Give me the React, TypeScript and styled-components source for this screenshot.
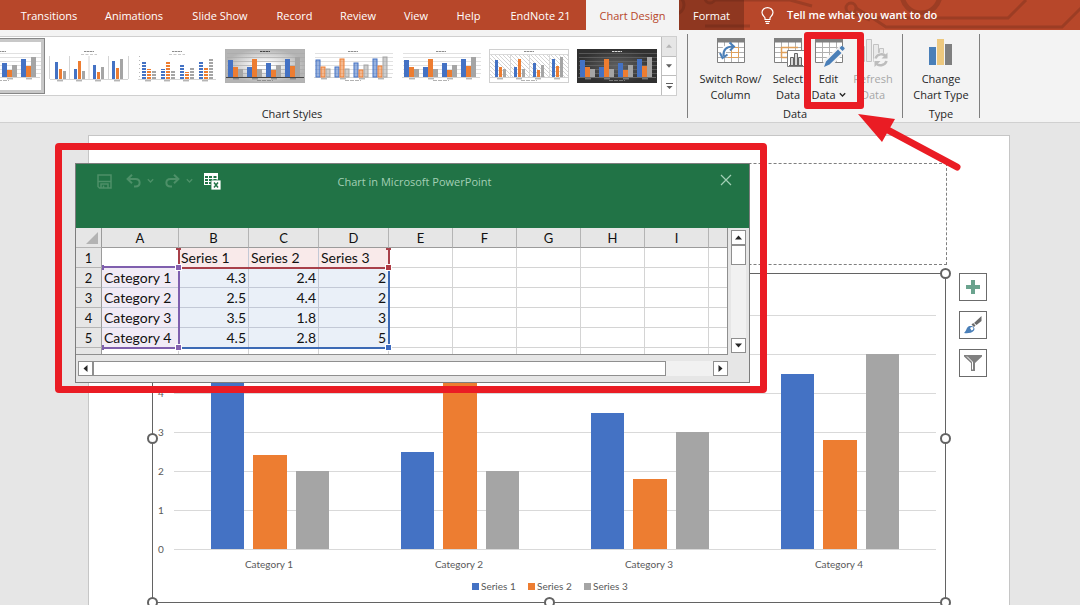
import React from 'react';
import styled, { createGlobalStyle, css } from 'styled-components';

const ui = '"Open Sans", "Segoe UI", sans-serif';
const calibri = 'Lato, Calibri, sans-serif';
const red = '#ea1c24';
const blue = '#4472c4';
const orange = '#ed7d31';
const gray = '#a5a5a5';

const GlobalStyle = createGlobalStyle`
  * { box-sizing: border-box; }
  body { margin: 0; background: #e6e6e6; font: 11px/16px ${ui}; color: #262626; }
  button { font: inherit; color: inherit; padding: 0; margin: 0; border: 0; background: none; }
  svg { display: block; }
`;

const Page = styled.div`
  display: flex;
  flex-direction: column;
  height: 100vh;
  overflow: hidden;
`;

/* ---------- tab strip ---------- */

const TabStrip = styled.nav`
  position: relative;
  display: flex;
  height: 30px;
  flex: none;
  padding-left: 7px;
  background: #b7472a;
  color: #fff;
  overflow: hidden;
`;

const Circuit = styled.svg`
  position: absolute;
  left: 670px;
  top: 0;
  fill: none;
  stroke: #9c3d24;
  stroke-width: 3;
`;

const Tab = styled.button<{ $width: number; $kind?: 'active' | 'context' }>`
  position: relative;
  width: ${p => p.$width}px;
  flex: none;
  line-height: 32px;
  white-space: nowrap;
  ${p => p.$kind === 'active' && css`background: #f3f3f3; color: #b7472a;`}
  ${p => p.$kind === 'context' && css`background: rgba(80, 30, 15, 0.38);`}
`;

const TellMe = styled.button`
  position: relative;
  display: flex;
  align-items: center;
  gap: 13px;
  margin-left: 17px;
  font-weight: 600;
`;

const tabs: { name: string; width: number; kind?: 'active' | 'context' }[] = [
  { name: 'Transitions', width: 84 },
  { name: 'Animations', width: 86 },
  { name: 'Slide Show', width: 86 },
  { name: 'Record', width: 63 },
  { name: 'Review', width: 64 },
  { name: 'View', width: 52 },
  { name: 'Help', width: 53 },
  { name: 'EndNote 21', width: 91 },
  { name: 'Chart Design', width: 93, kind: 'active' },
  { name: 'Format', width: 65, kind: 'context' },
];

/* ---------- ribbon ---------- */

const Ribbon = styled.div`
  display: flex;
  flex: none;
  height: 93px;
  padding-top: 4px;
  background: #f3f3f3;
  border-bottom: 1px solid #d0d0d0;
`;

const Group = styled.section<{ $width: number }>`
  display: flex;
  flex-direction: column;
  justify-content: space-between;
  flex: none;
  width: ${p => p.$width}px;
  height: 84px;
  border-right: 1px solid #7f7f7f;
`;

const GroupLabel = styled.h2<{ $inset?: number }>`
  margin: 0 0 -4px;
  padding-right: ${p => p.$inset ?? 0}px;
  font: 11px/16px ${ui};
  text-align: center;
`;

const Gallery = styled.div`
  display: flex;
  height: 60px;
  width: 677px;
  margin-top: 2px;
  border: solid #cfcfcf;
  border-width: 1px 1px 1px 0;
  background: #fff;
`;

const Styles = styled.div`
  display: flex;
  flex: 1;
  overflow: hidden;
`;

const StyleCell = styled.button<{ $selected?: boolean }>`
  display: flex;
  align-items: center;
  justify-content: center;
  flex: none;
  width: 88px;
  height: 58px;
  ${p => p.$selected && css`
    margin-left: -43px;
    margin-top: 1px;
    height: 56px;
    border: 1px solid #868686;
    box-shadow: inset 0 0 0 3px #c8c8c8;
  `}
`;

const GalleryScroll = styled.div`
  display: flex;
  flex-direction: column;
  width: 15px;
  border-left: 1px solid #bdbdbd;
`;

const ScrollStep = styled.button<{ $off?: boolean }>`
  display: flex;
  align-items: center;
  justify-content: center;
  flex: 1;
  background: ${p => (p.$off ? '#e6e6e6' : '#fff')};
  color: ${p => (p.$off ? '#b5b5b5' : '#5f5f5f')};
  & + & { border-top: 1px solid #bdbdbd; }
`;

const Commands = styled.div<{ $pad?: number }>`
  display: flex;
  padding-left: ${p => p.$pad ?? 0}px;
`;

const Command = styled.button<{ $width: number; $off?: boolean }>`
  position: relative;
  display: flex;
  flex-direction: column;
  align-items: center;
  flex: none;
  width: ${p => p.$width}px;
  padding-top: 2px;
  white-space: nowrap;
  opacity: ${p => (p.$off ? 0.38 : 1)};
  & > svg { margin-bottom: 3px; }
`;

const WithChevron = styled.span`
  display: flex;
  align-items: center;
  gap: 3px;
`;

const EditMark = styled.span`
  position: absolute;
  left: -2px;
  top: -2px;
  width: 60px;
  height: 77px;
  border: 7px solid ${red};
  border-radius: 3px;
  z-index: 3;
`;

const Arrow = styled.svg`
  position: absolute;
  left: 50px;
  top: 75px;
  z-index: 3;
`;

const EditCommand = styled(Command)`
  z-index: 4;
`;

/* ---------- slide ---------- */

const Stage = styled.main`
  position: relative;
  flex: 1;
  padding: 12px 70px 0 88px;
`;

const Slide = styled.div`
  height: 600px;
  padding: 27px 63px 0;
  border: 1px solid #c6c6c6;
  background: #fff;
`;

const TitleBox = styled.div`
  height: 102px;
  margin-right: -1px;
  border: 1px dashed #7f7f7f;
`;

const ChartFrame = styled.div`
  position: relative;
  margin-top: 8px;
  & > svg { width: 100%; height: auto; overflow: visible; }
  text { font: 10px ${calibri}; fill: #595959; }
`;

const ChartTools = styled.div`
  position: absolute;
  left: calc(100% + 13px);
  top: 0;
  display: flex;
  flex-direction: column;
  gap: 10px;
`;

const ChartTool = styled.button`
  display: flex;
  align-items: center;
  justify-content: center;
  width: 28px;
  height: 28px;
  border: 1px solid #6b6b6b;
  background: #fff;
`;

/* ---------- data sheet window ---------- */

const SheetMark = styled.div`
  position: absolute;
  left: 55px;
  top: 20px;
  padding: 13px 10px 3px 13px;
  border: 7px solid ${red};
  border-radius: 4px;
  z-index: 2;
`;

const Window = styled.section`
  width: 675px;
  height: 220px;
  border: 1px solid #7d7d7d;
  background: #e6e6e6;
`;

const WindowBar = styled.header`
  display: grid;
  grid-template-columns: 1fr auto 1fr;
  height: 64px;
  padding: 8px 17px 0 21px;
  background: #217346;
  color: #a3cfb5;
`;

const QuickTools = styled.div`
  display: flex;
  align-items: center;
  height: 18px;
  color: #4d9068;
`;

const QuickTool = styled.button<{ $gap: number }>`
  margin-right: ${p => p.$gap}px;
`;

const WindowTitle = styled.h1`
  margin: 0;
  padding-top: 1px;
  font: 11px/18px ${ui};
`;

const CloseButton = styled.button`
  justify-self: end;
  align-self: start;
  padding-top: 2px;
`;

const SheetBody = styled.div`
  display: flex;
`;

const SheetView = styled.div`
  position: relative;
  width: 652px;
  height: 127px;
  overflow: hidden;
  border: solid #8f8f8f;
  border-width: 0 1px 1px 0;
`;

const SelectionMarks = styled.svg`
  position: absolute;
  left: 0;
  top: 0;
`;

const Sheet = styled.table`
  width: 652px;
  table-layout: fixed;
  border-collapse: separate;
  border-spacing: 0;
  font: 14px/18px ${calibri};
  color: #111;
`;

const HeadCell = styled.th<{ $side?: boolean }>`
  height: 20px;
  padding: 0;
  font-weight: 400;
  font-size: 13px;
  text-align: center;
  overflow: hidden;
  background: #e6e6e6;
  border-right: 1px solid ${p => (p.$side ? '#9b9b9b' : '#b4b4b4')};
  border-bottom: 1px solid ${p => (p.$side ? '#b4b4b4' : '#9b9b9b')};
  & > svg { margin-left: 10px; }
`;

const Cell = styled.td<{ $fill?: string; $number?: boolean }>`
  height: 20px;
  padding: 1px 2px 0;
  overflow: hidden;
  white-space: nowrap;
  text-align: ${p => (p.$number ? 'right' : 'left')};
  background: ${p => p.$fill ?? '#fff'};
  border-right: 1px solid ${p => (p.$fill ? '#c3c9d6' : '#d4d4d4')};
  border-bottom: 1px solid ${p => (p.$fill ? '#c3c9d6' : '#d4d4d4')};
`;

const VScroll = styled.div`
  display: flex;
  flex-direction: column;
  width: 15px;
  height: 123px;
  margin: 2px 0 0 3px;
  background: #f1f1f1;
`;

const HScroll = styled.div`
  display: flex;
  width: 650px;
  height: 15px;
  margin: 6px 0 0 2px;
  background: #f1f1f1;
`;

const ArrowButton = styled.button`
  display: flex;
  align-items: center;
  justify-content: center;
  flex: none;
  width: 15px;
  height: 15px;
  border: 1px solid #8f8f8f;
  background: #fff;
`;

const Thumb = styled.div<{ $length: number; $vertical?: boolean }>`
  flex: none;
  width: ${p => (p.$vertical ? 15 : p.$length)}px;
  height: ${p => (p.$vertical ? p.$length : 15)}px;
  margin-${p => (p.$vertical ? 'bottom' : 'right')}: auto;
  border: 1px solid #8f8f8f;
  background: #fff;
`;

/* ---------- drawings ---------- */

const data = [
  { name: 'Category 1', values: [4.3, 2.4, 2] },
  { name: 'Category 2', values: [2.5, 4.4, 2] },
  { name: 'Category 3', values: [3.5, 1.8, 3] },
  { name: 'Category 4', values: [4.5, 2.8, 5] },
];
const seriesNames = ['Series 1', 'Series 2', 'Series 3'];
const seriesColors = [blue, orange, gray];

type ThumbKind = 'plain' | 'thin' | 'striped' | 'silver' | 'outline' | 'soft' | 'hatched' | 'dark';

function StyleThumb({ kind }: { kind: ThumbKind }) {
  const dark = kind === 'dark';
  const ink = dark ? '#ddd' : '#444';
  const line = dark ? '#6a6a6a' : kind === 'silver' ? '#aaa' : '#d4d4d4';
  const low = kind === 'thin' || kind === 'striped';
  const w = kind === 'thin' ? 3 : kind === 'hatched' ? 3 : kind === 'outline' ? 4 : 5;
  const step = kind === 'thin' || kind === 'hatched' ? 4 : 5;
  const base = low ? 30 : 28;
  return (
    <svg width="80" height="34" viewBox="0 0 80 34">
      <defs>
        <radialGradient id="silverFill"><stop offset="0.2" stopColor="#fff" /><stop offset="1" stopColor="#b4b4b4" /></radialGradient>
        <radialGradient id="darkFill"><stop offset="0.1" stopColor="#5c5c5c" /><stop offset="1" stopColor="#303030" /></radialGradient>
        <pattern id="hatch" width="4" height="4" patternUnits="userSpaceOnUse"><path d="M0 0L4 4" stroke="#c9c9c9" strokeWidth="0.800" /></pattern>
      </defs>
      {kind === 'silver' && <rect width="80" height="34" fill="url(#silverFill)" stroke="#b0b0b0" />}
      {dark && <rect width="80" height="34" fill="url(#darkFill)" />}
      {kind === 'hatched' && <><rect x="0.5" y="0.5" width="79" height="33" fill="#fff" stroke="#d0d0d0" /><rect x="1" y="5" width="78" height="24" fill="url(#hatch)" /></>}
      <path d="M35 2.500h10" stroke={ink} strokeWidth="1" strokeDasharray="2 .5 3 .5" opacity={dark || kind === 'silver' ? 1 : 0.6} />
      {low
        ? <path d="M32 5.500h16" stroke={ink} strokeWidth="0.7" strokeDasharray="3 1.5" opacity="0.4" />
        : <path d="M32 31.500h16" stroke={ink} strokeWidth="0.8" strokeDasharray="4 1" opacity="0.5" />}
      {!low && kind !== 'hatched' && <path d="M2 4.500h78M2 8.500h78M2 12.500h78M2 16.500h78M2 20.500h78M2 24.500h78" stroke={line} strokeWidth="0.7" />}
      {kind === 'thin' && <path d="M.5 7v23M20.500 7v23M40 7v23M59.500 7v23M79.500 7v23" stroke="#d4d4d4" />}
      {kind === 'striped' && <path d="M2.500 7v22" stroke="#999" strokeDasharray="1 3" opacity="0.7" />}
      {kind === 'hatched' && <path d="M21.500 5v23M40.500 5v23M60.500 5v23M1 5.500h78" stroke="#d9d9d9" />}
      <path d={`M1 ${base + 0.5}h78`} stroke={kind === 'silver' ? '#444' : line} />
      {data.map((d, c) => (
        <g key={d.name}>
          {d.values.map((v, s) => {
            const h = Math.round(v * 4);
            const x = (kind === 'thin' || kind === 'hatched' ? 6 : 3) + c * 19 + s * step + (kind === 'striped' ? 2 : 0);
            return (
              <g key={s}>
                {kind === 'striped'
                  ? <path d={`M${x + 2} ${base}v${-h}`} stroke={seriesColors[s]} strokeWidth="4" strokeDasharray="2 1" />
                  : <rect x={x} y={base - h} width={w} height={h} fill={seriesColors[s]}
                      fillOpacity={kind === 'outline' ? 0.55 : 1} stroke={kind === 'outline' ? seriesColors[s] : 'none'} />}
              </g>
            );
          })}
          <path d={`M${8 + c * 19} ${base + 1.8}h6`} stroke={ink} strokeWidth="0.8" opacity="0.7" />
        </g>
      ))}
    </svg>
  );
}

const kinds: ThumbKind[] = ['plain', 'thin', 'striped', 'silver', 'outline', 'soft', 'hatched', 'dark'];

const GridIcon = ({ children }: { children?: React.ReactNode }) => (
  <svg width="32" height="32" viewBox="0 0 32 32" fill="none">
    <path d="M2 2h28v25H2z" fill="#fff" />
    <path d="M9.500 6v21M16.500 6v21M23.500 6v21M2 11.500h28M2 16.500h28M2 21.500h28" stroke="#b0b0b0" />
    <path d="M2.500 2.500h27v24h-27z" stroke="#7f7f7f" />
    <path d="M2 2h28v4.500H2z" fill="#7f7f7f" />
    {children}
  </svg>
);

const SwitchIcon = () => (
  <GridIcon>
    <path d="M16.500 11.500h7v10h-7zM16.500 16.500h7M13 21.500h10" stroke="#e0a05a" />
    <path d="M8 19C8 13.500 11 10.500 16 10.500" stroke="#fff" strokeWidth="5" />
    <path d="M8.500 20C8 14 11 10.500 18 10.500" stroke="#4a7fb8" strokeWidth="2" />
    <path d="M14.500 6.500L19 10.500L15 14.500M5 17L7.500 22L12.500 18.500" stroke="#4a7fb8" strokeWidth="2" />
  </GridIcon>
);

const SelectIcon = () => (
  <GridIcon>
    <path d="M9.500 22V11.500H26M9.500 21.500h7M16 16.500h-6" stroke="#e0a05a" strokeWidth="1.500" />
    <path d="M15.500 14.500h17v16h-17z" fill="#fff" stroke="#7f7f7f" />
    <path d="M18.500 29.500v-8h3v8M22.500 29.500v-12h3v12M26.500 29.500v-8h3v8" fill="#d9d9d9" stroke="#666" />
    <path d="M17 29.500h14" stroke="#666" />
  </GridIcon>
);

const EditIcon = () => (
  <GridIcon>
    <path d="M9 32l2-8L27.500 9l6 5L19 30z" fill="#f3f3f3" />
    <path d="M11 31l2-5.500L25 13.500l3.500 3.500L16.500 28.500zM26.500 12l2-2c1-.7 4 2 3 3l-2 2z" fill="#4a7fb8" />
  </GridIcon>
);

const RefreshIcon = () => (
  <svg width="32" height="32" viewBox="0 0 32 32" fill="none" stroke="#777">
    <path d="M3.500 10.500h4v15h-4zM9.500 3.500h5v22h-5zM16.500 8.500h5v17h-5zM22.500 12.500h4v5h-4z" fill="#ddd" />
    <circle cx="24" cy="24" r="7.500" fill="#f3f3f3" stroke="none" />
    <path d="M18.500 22.500C20 17.500 27 17 29 21M29.500 25C28 30 21 30.500 19 27" strokeWidth="2.500" stroke="#666" />
    <path d="M30.500 16.500v6h-6zM17.500 31v-6h6z" fill="#666" stroke="none" />
  </svg>
);

const ChartTypeIcon = () => (
  <svg width="32" height="32" viewBox="0 0 32 32">
    <path d="M4 11h7v18H4z" fill="#4a7fb8" /><path d="M12 3h7v26h-7z" fill="#edc87e" /><path d="M20 8h7v21h-7z" fill="#7f7f7f" />
  </svg>
);

const Chevron = () => (
  <svg width="7" height="6" viewBox="0 0 7 6" fill="none" stroke="currentColor" strokeWidth="1.300"><path d="M.8 1.200L3.500 4L6.200 1.200" /></svg>
);

const Triangle = ({ turn = 0, size = 7 }: { turn?: number; size?: number }) => (
  <svg width={size} height={size} viewBox="0 0 7 7"><path d="M0 5.500h7L3.500 1.500z" fill="currentColor" transform={`rotate(${turn} 3.500 3.500)`} /></svg>
);

const Bulb = () => (
  <svg width="13" height="17" viewBox="0 0 13 17" fill="none" stroke="#fff" strokeWidth="1.200">
    <path d="M4 12.500V11C3.500 9.500 1 8.300 1 5.600a5.500 5 0 0 1 11 0C12 8.300 9.500 9.500 9 11v1.500zM4 14.500h5M4.800 16.400h3.400" />
  </svg>
);

const Undo = ({ flip }: { flip?: boolean }) => (
  <svg width="15" height="14" viewBox="0 0 15 14" fill="none" stroke="currentColor" strokeWidth="2">
    <g transform={flip ? 'matrix(-1 0 0 1 15 0)' : undefined}><path d="M6 .8L1.600 5L6 9.200M2 5h7.500c5.500 0 5.500 7.500 0 7.500H8" /></g>
  </svg>
);

/* y position of a value in the chart's own coordinates */
const valueY = (v: number) => 549 - v * 39;

function Chart() {
  return (
    <svg viewBox="152 273 794 330" role="img" aria-label="Clustered column chart">
      {[0, 1, 2, 3, 4, 5, 6].map(v => (
        <path key={v} d={`M174 ${valueY(v) + 0.5}H936`} stroke="#d9d9d9" />
      ))}
      {[0, 1, 2, 3, 4].map(v => (
        <text key={v} x="161" y={valueY(v) + 4} textAnchor="middle">{v}</text>
      ))}
      {data.map((d, c) => (
        <g key={d.name}>
          {d.values.map((v, s) => (
            <rect key={s} x={[211, 253, 296][s] + c * 190} y={Math.round(valueY(v))} width={s === 1 ? 34 : 33}
              height={549 - Math.round(valueY(v))} fill={seriesColors[s]} />
          ))}
          <text x={269 + c * 190} y="568" textAnchor="middle">{d.name}</text>
        </g>
      ))}
      {seriesNames.map((name, s) => (
        <g key={name}>
          <rect x={472 + s * 56} y="583" width="7" height="7" fill={seriesColors[s]} />
          <text x={481 + s * 56} y="590">{name}</text>
        </g>
      ))}
      <rect x="152.500" y="273.500" width="793" height="329" fill="none" stroke="#636363" />
      {[[152, 273], [549, 273], [945, 273], [152, 438], [945, 438], [152, 602], [549, 602], [945, 602]].map(([x, y]) => (
        <circle key={`${x}-${y}`} cx={x + 0.5} cy={y + 0.5} r="4.500" fill="#fff" stroke="#636363" strokeWidth="2" />
      ))}
    </svg>
  );
}

const columns = ['A', 'B', 'C', 'D', 'E', 'F', 'G', 'H', 'I', ''];
const columnWidths = [26, 77, 70, 70, 70, 64, 64, 64, 64, 64, 19];
const rows: (string | number)[][] = [['', ...seriesNames], ...data.map(d => [d.name, ...d.values]), []];

function fillFor(row: number, col: number) {
  if (row > 4 || col > 3) return undefined;
  if (row === 0) return col === 0 ? undefined : '#f9eaea';
  return col === 0 ? '#f1ebf6' : '#eaf0f8';
}

const handles = [
  { x: 312, y: 40, fill: '#b03a44' },
  { x: 102, y: 40, fill: '#8560b0' },
  { x: 102, y: 120, fill: '#8560b0' },
  { x: 312, y: 120, fill: '#3c6ac0' },
];

function DataSheet() {
  return (
    <SheetView>
      <Sheet>
        <colgroup>{columnWidths.map((w, i) => <col key={i} width={w} />)}</colgroup>
        <thead>
          <tr>
            <HeadCell $side><svg width="12" height="12"><path d="M12 0v12H0z" fill="#b3b3b3" /></svg></HeadCell>
            {columns.map((c, i) => <HeadCell key={i} scope="col">{c}</HeadCell>)}
          </tr>
        </thead>
        <tbody>
          {rows.map((row, r) => (
            <tr key={r}>
              <HeadCell $side scope="row">{r < 5 ? r + 1 : ''}</HeadCell>
              {columns.map((_, c) => (
                <Cell key={c} $fill={fillFor(r, c)} $number={typeof row[c] === 'number'}>{row[c]}</Cell>
              ))}
            </tr>
          ))}
        </tbody>
      </Sheet>
      <SelectionMarks width="652" height="127" fill="none" strokeWidth="2">
        <path d="M103 22v18M313 22v18M103 40H313M100 21h5M310 21h5" stroke="#a8404a" />
        <path d="M313 40v80M103 120H313" stroke="#3c6ab5" />
        <path d="M26 39H103M26 120H103M103 39v81" stroke="#7f5fae" />
        <path d="M26 37h2v5h-2zM26 117h2v5h-2z" fill="#7f5fae" />
        {handles.map(h => (
          <rect key={`${h.x}-${h.y}`} x={h.x - 2.5} y={h.y - 3.5} width="6" height="6" fill={h.fill} stroke="#fff" strokeWidth="1" />
        ))}
      </SelectionMarks>
    </SheetView>
  );
}

export default function App() {
  return (
    <Page>
      <GlobalStyle />
      <TabStrip>
        <Circuit width="410" height="30" viewBox="670 0 410 30">
          <circle cx="675" cy="5" r="9" /><circle cx="710" cy="-2" r="5" />
          <path d="M705 26H750M715 0H790L812 6M856 8L872 18H1008L1026 0M850 12L870 20M868 15L886 27H1062L1084 5M1010 16L1026 0" />
          <circle cx="851" cy="8" r="5" /><circle cx="921" cy="-6" r="19" strokeWidth="5" />
        </Circuit>
        {tabs.map(t => <Tab key={t.name} $width={t.width} $kind={t.kind}>{t.name}</Tab>)}
        <TellMe><Bulb />Tell me what you want to do</TellMe>
      </TabStrip>

      <Ribbon>
        <Group $width={688}>
          <Gallery>
            <Styles>
              {kinds.map((k, i) => <StyleCell key={k} $selected={i === 0} aria-label={`Style ${i + 1}`}><StyleThumb kind={k} /></StyleCell>)}
            </Styles>
            <GalleryScroll>
              <ScrollStep $off aria-label="Previous styles"><Triangle size={6} /></ScrollStep>
              <ScrollStep aria-label="Next styles"><Triangle turn={180} size={6} /></ScrollStep>
              <ScrollStep aria-label="More styles">
                <svg width="7" height="8" viewBox="0 0 7 8"><path d="M0 1h7v1H0zM.5 4h6l-3 3z" fill="currentColor" /></svg>
              </ScrollStep>
            </GalleryScroll>
          </Gallery>
          <GroupLabel $inset={103}>Chart Styles</GroupLabel>
        </Group>
        <Group $width={215}>
          <Commands $pad={3}>
            <Command $width={79}><SwitchIcon /><span>Switch Row/</span><span>Column</span></Command>
            <Command $width={36}><SelectIcon /><span>Select</span><span>Data</span></Command>
            <EditCommand $width={45}>
              <EditIcon /><span>Edit</span><WithChevron>Data<Chevron /></WithChevron>
              <EditMark />
              <Arrow width="110" height="64" viewBox="0 0 110 64">
                <path d="M30 20L101 58" stroke={red} strokeWidth="7" strokeLinecap="round" />
                <path d="M2 5L39 10L26 33z" fill={red} />
              </Arrow>
            </EditCommand>
            <Command $width={44} $off disabled><RefreshIcon /><span>Refresh</span><span>Data</span></Command>
          </Commands>
          <GroupLabel>Data</GroupLabel>
        </Group>
        <Group $width={77}>
          <Commands>
            <Command $width={76}><ChartTypeIcon /><span>Change</span><span>Chart Type</span></Command>
          </Commands>
          <GroupLabel>Type</GroupLabel>
        </Group>
      </Ribbon>

      <Stage>
        <Slide>
          <TitleBox />
          <ChartFrame>
            <Chart />
            <ChartTools>
              <ChartTool aria-label="Chart elements">
                <svg width="14" height="14"><path d="M5 0h4v5h5v4H9v5H5V9H0V5h5z" fill="#6aa38e" /></svg>
              </ChartTool>
              <ChartTool aria-label="Chart styles">
                <svg width="20" height="20" viewBox="0 0 20 20">
                  <path d="M18.500 1v5L13.500 10L11 8zM12.500 10.500L11 12L8.500 9.500L10.200 8z" fill="#6b6b6b" />
                  <path d="M1 18C4 15.500 3 12 6.500 11C10.500 10.500 13 13.500 10.500 16C8.500 18 5 18.500 1 18z" fill="#4a7fb8" />
                  <path d="M7 13q2-2 3.500 0q0 2-2 2.500z" fill="#fff" />
                </svg>
              </ChartTool>
              <ChartTool aria-label="Chart filters">
                <svg width="20" height="18" viewBox="0 0 20 18">
                  <path d="M1 1h18v1.500L12 9v8H8V9L1 2.500z" fill="#808080" /><path d="M4 2.500L9.500 8v7.500" fill="none" stroke="#fff" />
                </svg>
              </ChartTool>
            </ChartTools>
          </ChartFrame>
        </Slide>

        <SheetMark>
          <Window>
            <WindowBar>
              <QuickTools>
                <QuickTool $gap={14} aria-label="Save">
                  <svg width="15" height="15" viewBox="0 0 15 15" fill="none" stroke="currentColor" strokeWidth="1.500">
                    <path d="M1 1h13v13H2.500L1 12.500zM1 7.500h13M4 14v-4h7v4M6.500 11.500V14" />
                  </svg>
                </QuickTool>
                <QuickTool $gap={6} aria-label="Undo"><Undo /></QuickTool>
                <QuickTool $gap={11} aria-label="Undo options"><Chevron /></QuickTool>
                <QuickTool $gap={6} aria-label="Redo"><Undo flip /></QuickTool>
                <QuickTool $gap={11} aria-label="Redo options"><Chevron /></QuickTool>
                <QuickTool $gap={0} aria-label="Edit data in Excel">
                  <svg width="17" height="17" viewBox="0 0 17 17">
                    <path d="M0 0h14v12H0z" fill="#fff" />
                    <path d="M1 3h3v2H1zM5 3h3v2H5zM9.500 3h3v2h-3zM1 6h3v2H1zM5 6h3v2H5zM9.500 6h3v2h-3zM1 9h3v2H1zM5 9h3v2H5z" fill="#217346" />
                    <path d="M7 7h10v10H7z" fill="#fff" stroke="#217346" strokeWidth=".8" />
                    <path d="M10 9.500l4 5M14 9.500l-4 5" stroke="#217346" strokeWidth="1.500" />
                  </svg>
                </QuickTool>
              </QuickTools>
              <WindowTitle>Chart in Microsoft PowerPoint</WindowTitle>
              <CloseButton aria-label="Close">
                <svg width="12" height="12" viewBox="0 0 12 12" stroke="currentColor" strokeWidth="1.200"><path d="M1 1l10 10M11 1L1 11" /></svg>
              </CloseButton>
            </WindowBar>
            <SheetBody>
              <DataSheet />
              <VScroll>
                <ArrowButton aria-label="Scroll up"><Triangle /></ArrowButton>
                <Thumb $vertical $length={20} />
                <ArrowButton aria-label="Scroll down"><Triangle turn={180} /></ArrowButton>
              </VScroll>
            </SheetBody>
            <HScroll>
              <ArrowButton aria-label="Scroll left"><Triangle turn={-90} /></ArrowButton>
              <Thumb $length={573} />
              <ArrowButton aria-label="Scroll right"><Triangle turn={90} /></ArrowButton>
            </HScroll>
          </Window>
        </SheetMark>
      </Stage>
    </Page>
  );
}
